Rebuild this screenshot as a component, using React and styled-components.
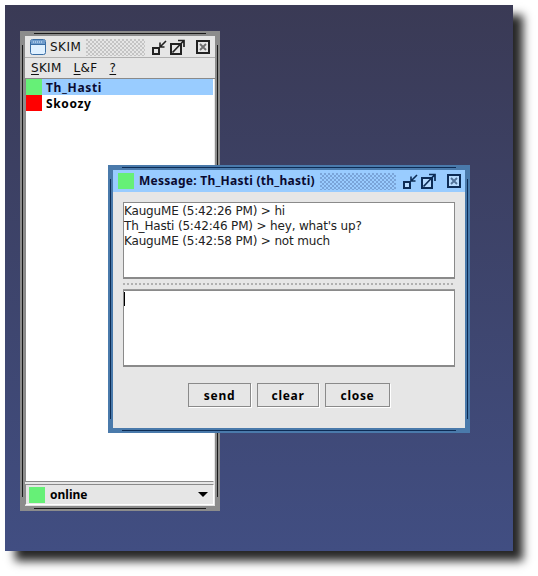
import React from 'react';
import styled, { createGlobalStyle } from 'styled-components';

const BOLD_FONT = '"Noto Sans", "DejaVu Sans", sans-serif';

const GlobalStyle = createGlobalStyle`
  html, body {
    margin: 0;
    background: #fff;
  }
  body {
    width: 538px;
    height: 576px;
    overflow: hidden;
    font-family: "DejaVu Sans", "Liberation Sans", sans-serif;
  }
`;

const Desktop = styled.div`
  position: relative;
  margin: 5px;
  width: 508px;
  height: 546px;
  background: linear-gradient(#3a3a55, #414e82);
  box-shadow: 10px 10px 9px rgba(0, 0, 0, 0.85);
`;

/* windows sit on the desktop at free positions */
const Frame = styled.div`
  position: absolute;
  left: ${p => p.$x}px;
  top: ${p => p.$y}px;
  width: ${p => p.$w}px;
  height: ${p => p.$h}px;
  box-sizing: border-box;
  padding: 5px;
  display: flex;
  background: ${p => p.$edge};

  /* top + bottom grip lines */
  &::before {
    content: '';
    position: absolute;
    left: 14px;
    right: 14px;
    top: 2px;
    bottom: 2px;
    border-top: 1px solid ${p => p.$line};
    border-bottom: 1px solid ${p => p.$line};
    pointer-events: none;
  }
  /* left + right grip lines */
  &::after {
    content: '';
    position: absolute;
    top: 14px;
    bottom: 14px;
    left: 2px;
    right: 2px;
    border-left: 1px solid ${p => p.$line};
    border-right: 1px solid ${p => p.$line};
    pointer-events: none;
  }
`;

const Inner = styled.div`
  flex: 1;
  min-width: 0;
  display: flex;
  flex-direction: column;
  background: #e6e6e6;
`;

const TitleBar = styled.div`
  height: 22px;
  flex: none;
  display: flex;
  align-items: center;
  padding: 0 ${p => p.$padRight}px 0 5px;
  background: ${p => p.$bg};
  border-bottom: 1px solid ${p => p.$rule};
  box-sizing: border-box;
`;

const TitleText = styled.span`
  font-size: 12px;
  font-family: ${p => (p.$bold ? BOLD_FONT : 'inherit')};
  font-weight: ${p => (p.$bold ? 700 : 400)};
  color: ${p => p.$color};
  margin-left: ${p => p.$gap}px;
  letter-spacing: ${p => p.$track}px;
  white-space: nowrap;
`;

const Bumps = styled.div`
  flex: 1;
  align-self: stretch;
  margin: 3px 6px 1px 5px;
  background-image:
    radial-gradient(circle at 1px 1px, ${p => p.$dot} 0.8px, transparent 0.9px),
    radial-gradient(circle at 1px 1px, ${p => p.$dot} 0.8px, transparent 0.9px);
  background-size: 4px 4px;
  background-position: 0 0, 2px 2px;
`;

const Ctl = styled.svg`
  flex: none;
  display: block;
  margin-left: ${p => p.$gap}px;
`;

const Swatch = styled.span`
  flex: none;
  display: block;
  width: 16px;
  height: 16px;
  background: ${p => p.$color};
`;

const MenuBar = styled.div`
  flex: none;
  height: 21px;
  display: flex;
  align-items: center;
  padding: 0 0 0 6px;
  gap: 12px;
  border-bottom: 1px solid #8a8a8a;
  box-sizing: border-box;
`;

const MenuItem = styled.span`
  font-size: 12px;
  color: #111;
  letter-spacing: 0.3px;
  white-space: nowrap;
`;

const Mnemonic = styled.span`
  text-decoration: underline;
  text-decoration-thickness: 1px;
  text-underline-offset: 2px;
`;

const List = styled.div`
  flex: 1;
  margin: 0 1px 2px 0;
  background: #fff;
  border-left: 1px solid #8a8a8a;
  border-bottom: 1px solid #8a8a8a;
  border-right: 1px solid #fff;
  box-sizing: border-box;
`;

const Row = styled.div`
  height: 16px;
  display: flex;
  align-items: center;
  gap: 4px;
  background: ${p => (p.$selected ? '#99ccff' : 'transparent')};
  font-family: ${BOLD_FONT};
  font-size: 12px;
  font-weight: 700;
  letter-spacing: 0.65px;
  color: ${p => (p.$selected ? '#0a0a30' : '#000')};
`;

const Combo = styled.div`
  flex: none;
  height: 21px;
  margin: 0 1px 1px 0;
  padding: 0 5px 0 3px;
  display: flex;
  align-items: center;
  gap: 5px;
  border-top: 1px solid #8a8a8a;
  border-left: 1px solid #8a8a8a;
  border-right: 1px solid #fff;
  border-bottom: 1px solid #fff;
  box-sizing: border-box;
  font-family: ${BOLD_FONT};
  font-size: 12px;
  font-weight: 700;
  letter-spacing: 0;
  color: #000;
`;

const ComboLabel = styled.span`
  flex: 1;
`;

const Arrow = styled.span`
  width: 0;
  height: 0;
  border-left: 5px solid transparent;
  border-right: 5px solid transparent;
  border-top: 5px solid #000;
`;

const Body = styled.div`
  flex: 1;
  display: flex;
  flex-direction: column;
  padding: 10px 10px 0 10px;
`;

const TextBox = styled.div`
  flex: none;
  height: 77px;
  box-sizing: border-box;
  background: #fff;
  border: 1px solid #8a8a8a;
  border-bottom-width: 2px;
  padding: 1px 0 0 0;
  font-size: 12px;
  line-height: 15px;
  letter-spacing: -0.17px;
  color: #222;
  white-space: nowrap;
`;

const Caret = styled.div`
  width: 1px;
  height: 14px;
  background: #000;
`;

const Divider = styled.div`
  flex: none;
  height: 4px;
  margin: 3px 0 0;
  padding-bottom: 3px;
  border-bottom: 1px solid #9a9a9a;
  background-image: radial-gradient(circle at 1px 2px, #b0b0b0 0.8px, transparent 0.9px);
  background-size: 4px 4px;
  background-repeat: repeat-x;
`;

const Buttons = styled.div`
  flex: none;
  display: flex;
  gap: 6px;
  margin: 16px 0 0 65px;
`;

const Button = styled.div`
  width: ${p => p.$w}px;
  height: 24px;
  box-sizing: border-box;
  border: 1px solid #8a8a8a;
  box-shadow: 1px 1px 0 #fff;
  display: flex;
  align-items: center;
  justify-content: center;
  font-family: ${BOLD_FONT};
  font-size: 12px;
  font-weight: 700;
  letter-spacing: 0.7px;
  color: #000;
`;

const WindowIcon = () => (
  <svg width="16" height="16" viewBox="0 0 16 16">
    <rect x="0.5" y="0.5" width="15" height="15" rx="2" fill="#dff0ff" stroke="#3a6ea5" />
    <rect x="1" y="1" width="14" height="4" fill="#6f9ccc" />
    <path d="M3 3h1M5 3h1M7 3h1M9 3h1M11 3h1" stroke="#dff0ff" />
    <path d="M1 5.5h14" stroke="#3a6ea5" />
  </svg>
);

const Iconify = ({ ink, hi }) => (
  <Ctl width="16" height="16" viewBox="0 0 16 16" $gap={0}>
    <rect x="2" y="9" width="6" height="6" fill={hi} stroke={ink} strokeWidth="2" />
    <path d="M15 2 9 8M9 3.5V8h4.5" fill="none" stroke={ink} strokeWidth="1.6" />
  </Ctl>
);

const Maximize = ({ ink, hi }) => (
  <Ctl width="16" height="16" viewBox="0 0 16 16" $gap={2}>
    <rect x="2" y="5" width="10" height="10" fill={hi} stroke={ink} strokeWidth="2" />
    <path d="M3.5 13.5 14.5 2M9 1.5h6V8" fill="none" stroke={ink} strokeWidth="1.7" />
  </Ctl>
);

const CloseBox = ({ ink, hi }) => (
  <Ctl width="14" height="14" viewBox="0 0 14 14" $gap={11}>
    <rect x="1" y="1" width="12" height="12" fill={hi} stroke={ink} strokeWidth="2" />
    <path d="M4 4l6 6M10 4l-6 6" stroke={ink} strokeWidth="1.8" opacity="0.6" />
  </Ctl>
);

const Controls = ({ ink, hi }) => (
  <>
    <Iconify ink={ink} hi={hi} />
    <Maximize ink={ink} hi={hi} />
    <CloseBox ink={ink} hi={hi} />
  </>
);

const App = () => (
  <>
    <GlobalStyle />
    <Desktop>
      <Frame $x={15} $y={26} $w={200} $h={480} $edge="#8c8c8c" $line="#1a1a1a">
        <Inner>
          <TitleBar $padRight={5} $bg="#e6e6e6" $rule="#b0b0b0">
            <WindowIcon />
            <TitleText $color="#111" $gap={4} $track={0.5}>SKIM</TitleText>
            <Bumps $dot="#c4c4c4" />
            <Controls ink="#222" hi="#e6e6e6" />
          </TitleBar>
          <MenuBar>
            <MenuItem><Mnemonic>S</Mnemonic>KIM</MenuItem>
            <MenuItem><Mnemonic>L</Mnemonic>&amp;F</MenuItem>
            <MenuItem><Mnemonic>?</Mnemonic></MenuItem>
          </MenuBar>
          <List>
            <Row $selected>
              <Swatch $color="#66f077" />
              Th_Hasti
            </Row>
            <Row>
              <Swatch $color="#ff0000" />
              Skoozy
            </Row>
          </List>
          <Combo>
            <Swatch $color="#66f077" />
            <ComboLabel>online</ComboLabel>
            <Arrow />
          </Combo>
        </Inner>
      </Frame>

      <Frame $x={103} $y={160} $w={362} $h={268} $edge="#4a7aab" $line="#0d2c55">
        <Inner>
          <TitleBar $padRight={4} $bg="#99ccff" $rule="#99ccff">
            <Swatch $color="#66f077" />
            <TitleText $bold $color="#0a0a30" $gap={5} $track={0.25}>Message: Th_Hasti (th_hasti)</TitleText>
            <Bumps $dot="#7aa4d8" />
            <Controls ink="#0d2c55" hi="#b8dcff" />
          </TitleBar>
          <Body>
            <TextBox>
              <div>KauguME (5:42:26 PM) &gt; hi</div>
              <div>Th_Hasti (5:42:46 PM) &gt; hey, what's up?</div>
              <div>KauguME (5:42:58 PM) &gt; not much</div>
            </TextBox>
            <Divider />
            <TextBox>
              <Caret />
            </TextBox>
            <Buttons>
              <Button $w={63}>send</Button>
              <Button $w={62}>clear</Button>
              <Button $w={65}>close</Button>
            </Buttons>
          </Body>
        </Inner>
      </Frame>
    </Desktop>
  </>
);

export default App;
